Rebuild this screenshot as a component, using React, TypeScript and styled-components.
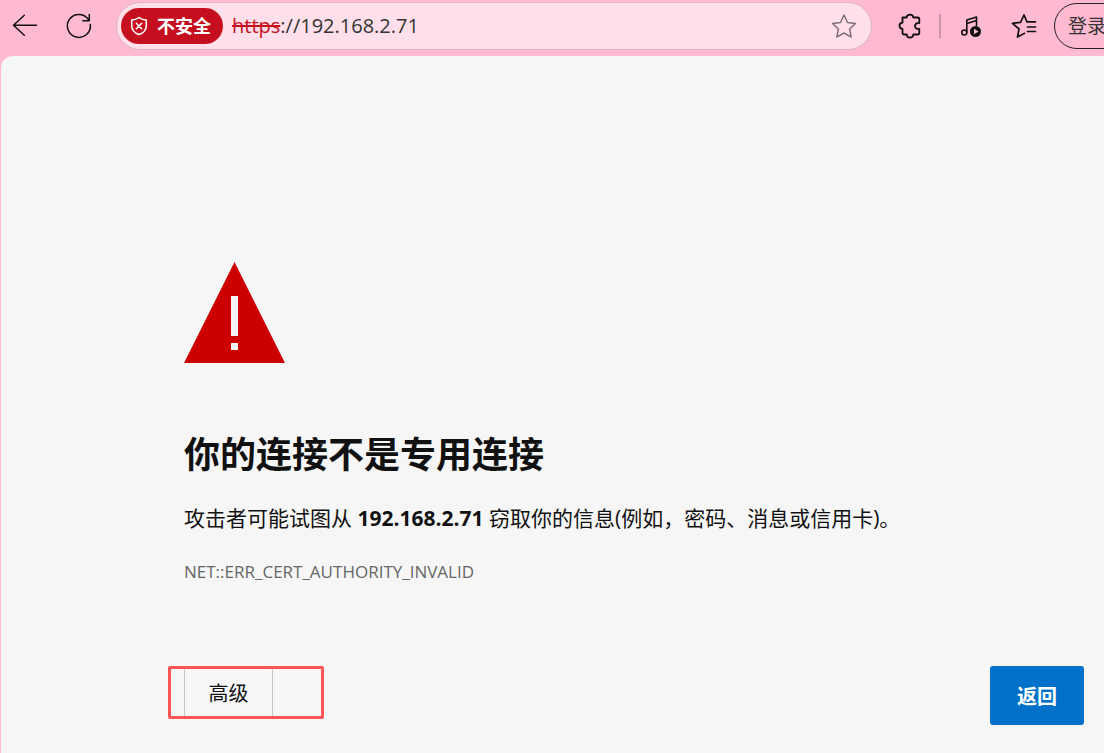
import React from "react";
import styled, { createGlobalStyle } from "styled-components";

const GlobalStyle = createGlobalStyle`
  *, *::before, *::after { box-sizing: border-box; }
  html, body, #root { height: 100%; }
  body {
    margin: 0;
    background: #ffb9d0;
    color: #111;
    font-family: "Open Sans", "Noto Sans CJK SC", sans-serif;
    overflow: hidden;
  }
  button, input { font-family: inherit; }
`;

const Window = styled.div`
  display: flex;
  flex-direction: column;
  min-height: 100%;
`;

const Toolbar = styled.header`
  display: flex;
  align-items: center;
  height: 56px;
  padding: 0 0 4px 10px;
  overflow: hidden;
`;

const IconButton = styled.button<{ $gap?: number; $color?: string }>`
  display: flex;
  flex: none;
  align-items: center;
  justify-content: center;
  width: 30px;
  height: 30px;
  margin: 0 0 0 ${(p) => p.$gap ?? 0}px;
  padding: 0;
  border: 0;
  background: transparent;
  color: ${(p) => p.$color ?? "#111"};
`;

const AddressBar = styled.div`
  display: flex;
  flex: 1;
  align-items: center;
  min-width: 0;
  height: 48px;
  margin-left: 22px;
  padding: 0 12px 0 4px;
  border: 1px solid #dbb5c1;
  border-radius: 24px;
  background: #ffe0ea;
`;

const SecurityBadge = styled.button`
  display: flex;
  flex: none;
  align-items: center;
  gap: 9px;
  width: 102px;
  height: 36px;
  padding: 0 0 0 9px;
  border: 0;
  border-radius: 18px;
  background: #c50f1f;
  color: #fff;
  font-size: 18px;
  font-weight: 700;
  line-height: 24px;
`;

const Url = styled.span`
  flex: 1;
  margin-left: 9px;
  color: #333;
  font-size: 20px;
  line-height: 28px;
  white-space: nowrap;
`;

const Scheme = styled.s`
  color: #c50f1f;
`;

const Divider = styled.span`
  flex: none;
  width: 2px;
  height: 24px;
  margin-left: 14px;
  background: #cc94a6;
`;

const LoginButton = styled.button`
  flex: none;
  width: 72px;
  height: 46px;
  margin: 0 -22px 0 15px;
  padding: 0 0 0 13px;
  border: 1px solid #222;
  border-radius: 23px;
  background: transparent;
  color: #333;
  font-size: 19px;
  line-height: 28px;
  text-align: left;
`;

const Page = styled.main`
  flex: 1;
  margin-left: 1px;
  padding: 206px 20px 28px 183px;
  border-top-left-radius: 12px;
  background: #f6f6f6;
`;

const WarningIcon = styled.svg`
  display: block;
  width: 101px;
  height: 101px;
`;

const Title = styled.h1`
  margin: 68px 0 0;
  font-size: 36px;
  font-weight: 700;
  line-height: 48px;
`;

const Message = styled.p`
  margin: 23px 0 0;
  font-size: 21px;
  line-height: 32px;
`;

const ErrorCode = styled.p`
  margin: 25px 0 0;
  color: #666;
  font-size: 17px;
  line-height: 26px;
`;

const Actions = styled.div`
  display: flex;
  align-items: flex-start;
  justify-content: space-between;
  margin-top: 81px;
`;

const AdvancedArea = styled.div`
  position: relative;
  padding-top: 2px;
`;

const Highlight = styled.span`
  position: absolute;
  inset: 0 -51px -2px -16px;
  border: 3px solid #fb5457;
  border-radius: 2px;
  pointer-events: none;
`;

const ActionButton = styled.button<{ $primary?: boolean }>`
  display: block;
  width: ${(p) => (p.$primary ? 94 : 89)}px;
  height: ${(p) => (p.$primary ? 59 : 49)}px;
  padding: 2px 0 0;
  border: ${(p) => (p.$primary ? "0" : "1px solid #c4c4c4")};
  border-radius: ${(p) => (p.$primary ? 3 : 2)}px;
  background: ${(p) => (p.$primary ? "#0070c9" : "transparent")};
  color: ${(p) => (p.$primary ? "#fff" : "#111")};
  font-size: 20px;
  font-weight: ${(p) => (p.$primary ? 700 : 400)};
  line-height: 28px;
`;

const Icon = ({ children, width = 1.5 }: { children: React.ReactNode; width?: number }) => (
  <svg
    width="30"
    height="30"
    viewBox="0 0 30 30"
    fill="none"
    stroke="currentColor"
    strokeWidth={width}
    strokeLinecap="round"
    strokeLinejoin="round"
    aria-hidden="true"
  >
    {children}
  </svg>
);

export default function App() {
  return (
    <Window>
      <GlobalStyle />
      <Toolbar>
        <IconButton aria-label="返回上一页">
          <Icon>
            <path d="M26.500 14.300H3.500M14.300 4.300L3.500 14.300L14.300 24.300" />
          </Icon>
        </IconButton>
        <IconButton aria-label="刷新" $gap={24}>
          <Icon>
            <path d="M26.300 13.500A11.500 11.500 0 1 1 24.300 8.300M25.300 3.500V9.700H18.800" />
          </Icon>
        </IconButton>
        <AddressBar>
          <SecurityBadge>
            <svg
              width="18"
              height="20"
              viewBox="0 0 18 20"
              fill="none"
              stroke="currentColor"
              strokeWidth="1.5"
              strokeLinejoin="round"
              strokeLinecap="round"
              aria-hidden="true"
            >
              <path d="M9 1.500C11 3.200 13.500 4 16.300 4V9.500C16.300 14 13.500 17 9 18.500C4.500 17 1.700 14 1.700 9.500V4C4.500 4 7 3.200 9 1.500Z" />
              <path d="M6.300 7.300L11.700 12.700M11.700 7.300L6.300 12.700" />
            </svg>
            不安全
          </SecurityBadge>
          <Url>
            <Scheme>https</Scheme>://192.168.2.71
          </Url>
          <IconButton aria-label="收藏此页" $color="#81717a">
            <Icon>
              <path d="M15 4L18.500 11.500L26.500 12.400L20.600 18L22.200 26L15 22L7.800 26L9.400 18L3.500 12.400L11.500 11.500Z" />
            </Icon>
          </IconButton>
        </AddressBar>
        <IconButton aria-label="扩展" $gap={23}>
          <Icon width={1.8}>
            <path d="M7.500 6.500H11.700C12 2.700 18 2.700 18.300 6.500H22.500Q24.300 6.500 24.300 8.300V12C18.500 11.500 18.500 18.500 24.300 18V21.700Q24.300 23.500 22.500 23.500H18.300C18 27.700 12 27.700 11.700 23.500H9.300Q7.500 23.500 7.500 21.700V18C3.500 17.500 3.500 12 7.500 11.700Z" />
          </Icon>
        </IconButton>
        <Divider />
        <IconButton aria-label="媒体控制" $gap={15}>
          <Icon width={1.6}>
            <circle cx="8.300" cy="21.500" r="2.500" />
            <path d="M10.800 21.500V9L20.500 6V15M10.800 12.500L20.500 9.500" />
            <circle cx="19.500" cy="20.500" r="5.500" fill="currentColor" stroke="none" />
            <path d="M18 17.800L22.500 20.500L18 23.200Z" fill="#ffb9d0" stroke="none" />
          </Icon>
        </IconButton>
        <IconButton aria-label="收藏夹" $gap={23}>
          <Icon width={1.7}>
            <path d="M15.500 22.300L8.500 26L10 18L3.500 12.400L11.500 11.300L15 4L18 10.800H26.500M18.500 16H26.500M18.500 20.500H26.500" />
          </Icon>
        </IconButton>
        <LoginButton>登录</LoginButton>
      </Toolbar>
      <Page>
        <WarningIcon viewBox="0 0 101 101" role="img" aria-label="警告">
          <path d="M50.500 0L101 101H0Z" fill="#c00" />
          <path d="M47 34H54V74H47ZM47 81H54V88H47Z" fill="#f6f6f6" />
        </WarningIcon>
        <Title>你的连接不是专用连接</Title>
        <Message>
          攻击者可能试图从 <strong>192.168.2.71</strong> 窃取你的信息(例如，密码、消息或信用卡)。
        </Message>
        <ErrorCode>NET::ERR_CERT_AUTHORITY_INVALID</ErrorCode>
        <Actions>
          <AdvancedArea>
            <ActionButton>高级</ActionButton>
            <Highlight />
          </AdvancedArea>
          <ActionButton $primary>返回</ActionButton>
        </Actions>
      </Page>
    </Window>
  );
}
